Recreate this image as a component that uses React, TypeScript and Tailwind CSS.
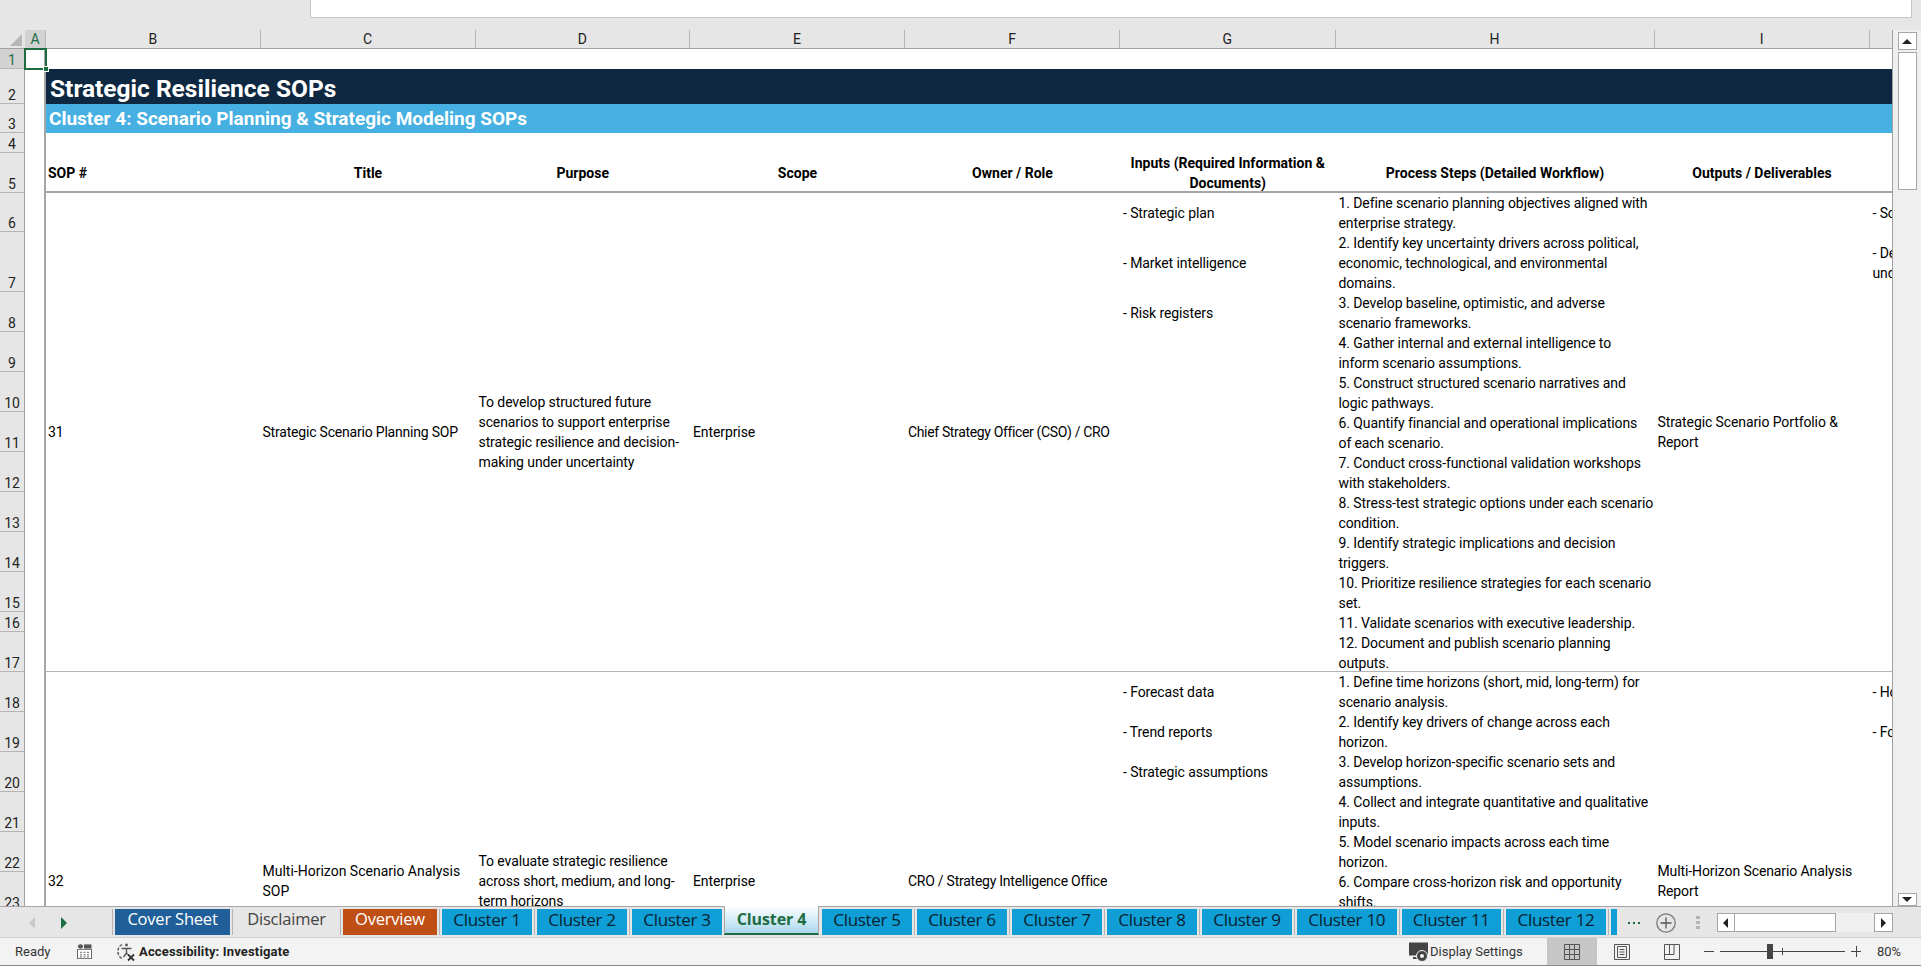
import React from "react";

const FONT = "font-['Roboto','Liberation_Sans',sans-serif]";
const TAB = "font-['Open_Sans','Noto_Sans',sans-serif] text-[16.5px] pb-[5px]";
const CTAB = "font-['Open_Sans','Noto_Sans',sans-serif] text-[17px] pb-[5px]";
const COLS = "grid grid-cols-[214.5px_215px_214.5px_215px_215px_215.5px_319px_215px_80px]";

const colLabels: [string, string][] = [
  ["A", "w-[21px]"],
  ["B", "w-[214.5px]"],
  ["C", "w-[215px]"],
  ["D", "w-[214.5px]"],
  ["E", "w-[215px]"],
  ["F", "w-[215px]"],
  ["G", "w-[215.5px]"],
  ["H", "w-[319px]"],
  ["I", "w-[215px]"],
];

const rowHeights: [number, string][] = [
  [1, "h-[20px]"], [2, "h-[35px]"], [3, "h-[29px]"], [4, "h-[20px]"], [5, "h-[40px]"],
  [6, "h-[39px]"], [7, "h-[60px]"], [8, "h-[40px]"], [9, "h-[40px]"], [10, "h-[40px]"],
  [11, "h-[40px]"], [12, "h-[40px]"], [13, "h-[40px]"], [14, "h-[40px]"], [15, "h-[40px]"],
  [16, "h-[20px]"], [17, "h-[40px]"], [18, "h-[40px]"], [19, "h-[40px]"], [20, "h-[40px]"],
  [21, "h-[40px]"], [22, "h-[40px]"], [23, "h-[40px]"],
];

const steps1 = [
  "1. Define scenario planning objectives aligned with", "enterprise strategy.",
  "2. Identify key uncertainty drivers across political,", "economic, technological, and environmental", "domains.",
  "3. Develop baseline, optimistic, and adverse", "scenario frameworks.",
  "4. Gather internal and external intelligence to", "inform scenario assumptions.",
  "5. Construct structured scenario narratives and", "logic pathways.",
  "6. Quantify financial and operational implications", "of each scenario.",
  "7. Conduct cross-functional validation workshops", "with stakeholders.",
  "8. Stress-test strategic options under each scenario", "condition.",
  "9. Identify strategic implications and decision", "triggers.",
  "10. Prioritize resilience strategies for each scenario", "set.",
  "11. Validate scenarios with executive leadership.",
  "12. Document and publish scenario planning", "outputs.",
];
const steps2 = [
  "1. Define time horizons (short, mid, long-term) for", "scenario analysis.",
  "2. Identify key drivers of change across each", "horizon.",
  "3. Develop horizon-specific scenario sets and", "assumptions.",
  "4. Collect and integrate quantitative and qualitative", "inputs.",
  "5. Model scenario impacts across each time", "horizon.",
  "6. Compare cross-horizon risk and opportunity", "shifts.",
];

function Lines({ lines }: { lines: string[] }) {
  return (
    <>
      {lines.map((l, i) => (
        <div key={i} className="h-[20px] leading-[20px] whitespace-nowrap">{l}</div>
      ))}
    </>
  );
}

const tabs: [string, string][] = [
  ["Cover Sheet", "w-[115px] bg-[#215f9a] text-white"],
  ["Disclaimer", "w-[103px] text-[#444]"],
  ["Overview", "w-[94px] bg-[#c04f15] text-white"],
];
const clusterTabs: [string, string][] = [
  ["Cluster 1", "w-[90px]"], ["Cluster 2", "w-[90px]"], ["Cluster 3", "w-[90px]"],
];
const clusterTabs2: [string, string][] = [
  ["Cluster 5", "w-[90px]"], ["Cluster 6", "w-[90px]"], ["Cluster 7", "w-[90px]"],
  ["Cluster 8", "w-[90px]"], ["Cluster 9", "w-[90px]"], ["Cluster 10", "w-[99.5px]"],
  ["Cluster 11", "w-[99.5px]"], ["Cluster 12", "w-[100px]"],
];

function TabSep() {
  return <div className="w-[1px] h-[26px] bg-[#b4b4b4] mx-[2px] shrink-0" />;
}

function ClusterTab({ label, w }: { label: string; w: string }) {
  return (
    <div className={`${w} ${CTAB} h-[26px] bg-[#0f9ed5] text-[#0a2230] flex items-center justify-center shrink-0 whitespace-nowrap tracking-[-0.3px]`}>
      {label}
    </div>
  );
}

export default function App() {
  return (
    <div className={`${FONT} w-[1921px] h-[966px] overflow-hidden flex flex-col bg-[#e6e6e6] text-[14px] tracking-[-0.1px] text-black`}>
      {/* formula strip */}
      <div className="h-[30px] shrink-0 pl-[310px] pr-[9px]">
        <div className="h-[18px] bg-white border-l border-r border-b border-[#c6c6c6]" />
      </div>

      {/* main */}
      <div className="flex h-[876px] shrink-0">
        <div className="w-[1893px] shrink-0 overflow-hidden border-r border-[#a0a0a0] flex flex-col">
          {/* column header */}
          <div className="flex h-[19px] shrink-0 border-b border-[#a0a0a0] bg-[#e6e6e6] text-[#222] leading-[18px]">
            <div className="w-[25px] shrink-0 flex items-end justify-end pr-[3px] pb-[2px]">
              <div className="w-0 h-0 border-l-[12px] border-l-transparent border-b-[12px] border-b-[#b7b7b7]" />
            </div>
            {colLabels.map(([l, w]) => (
              <div
                key={l}
                className={`${w} shrink-0 text-center border-r border-[#b4b4b4] ${l === "A" ? "bg-[#d2d2d2] text-[#1e6c41]" : ""}`}
              >
                {l}
              </div>
            ))}
          </div>

          <div className="flex flex-1 min-h-0">
            {/* row header */}
            <div className="w-[25px] shrink-0 bg-[#e6e6e6] border-r border-[#a0a0a0] text-[#222]">
              {rowHeights.map(([n, h]) => (
                <div
                  key={n}
                  className={`${h} box-border border-b border-[#b4b4b4] flex items-end justify-center leading-[15px] ${n === 1 ? "bg-[#d2d2d2] text-[#1e6c41]" : ""}`}
                >
                  {n}
                </div>
              ))}
            </div>

            {/* col A + sheet */}
            <div className="relative z-10 w-[21px] shrink-0 bg-white border-r-2 border-[#a6a6a6]">
              <div className="absolute left-[-1px] top-[-1px] w-[23px] h-[22px] border-2 border-[#1e6c41]">
                <div className="absolute right-[-4px] bottom-[-4px] w-[6px] h-[6px] bg-[#1e6c41] border border-white" />
              </div>
            </div>
            <div className="flex-1 min-w-0 bg-white overflow-hidden">
              <div className="h-[20px]" />
              <div className="h-[35px] bg-[#0e2841] text-white font-bold text-[24.5px] tracking-normal leading-[31px] pt-[4px] pl-[4px] whitespace-nowrap">
                Strategic Resilience SOPs
              </div>
              <div className="h-[29px] bg-[#45b0e1] text-white font-bold text-[19px] tracking-normal leading-[29px] pl-[3px] whitespace-nowrap">
                Cluster 4: Scenario Planning &amp; Strategic Modeling SOPs
              </div>
              <div className="h-[20px]" />
              {/* header row */}
              <div className={`${COLS} h-[40px] border-b-2 border-[#a6a6a6] font-bold text-[14px] tracking-normal leading-[20px]`}>
                <div className="pl-[2px] self-center">SOP #</div>
                <div className="text-center self-center">Title</div>
                <div className="text-center self-center">Purpose</div>
                <div className="text-center self-center">Scope</div>
                <div className="text-center self-center">Owner / Role</div>
                <div className="text-center self-center whitespace-nowrap">
                  Inputs (Required Information &amp;
                  <br />
                  Documents)
                </div>
                <div className="text-center self-center">Process Steps (Detailed Workflow)</div>
                <div className="text-center self-center">Outputs / Deliverables</div>
                <div />
              </div>

              {/* SOP 31 */}
              <div className={`${COLS} h-[479px] border-b border-[#b4b4b4]`}>
                <div className="pl-[2px] pb-[2px] self-center">31</div>
                <div className="pl-[2px] pb-[2px] self-center whitespace-nowrap tracking-[-0.2px]">Strategic Scenario Planning SOP</div>
                <div className="pl-[3px] pb-[2px] self-center">
                  <Lines lines={["To develop structured future", "scenarios to support enterprise", "strategic resilience and decision-", "making under uncertainty"]} />
                </div>
                <div className="pl-[3px] pb-[2px] self-center">Enterprise</div>
                <div className="pl-[3px] pb-[2px] self-center whitespace-nowrap tracking-[-0.35px]">Chief Strategy Officer (CSO) / CRO</div>
                <div className="pl-[3px] grid grid-rows-[40px_60px_40px] content-start items-center whitespace-nowrap">
                  <div>- Strategic plan</div>
                  <div>- Market intelligence</div>
                  <div>- Risk registers</div>
                </div>
                <div className="pl-[3px]"><Lines lines={steps1} /></div>
                <div className="pl-[3px] pb-[2px] self-center"><Lines lines={["Strategic Scenario Portfolio &", "Report"]} /></div>
                <div className="pl-[3px] grid grid-rows-[40px_60px] content-start items-center overflow-hidden">
                  <div className="whitespace-nowrap">- Scenario portfolio</div>
                  <div className="leading-[20px] whitespace-nowrap">- Decision guidance<br />under uncertainty</div>
                </div>
              </div>

              {/* SOP 32 */}
              <div className={`${COLS} h-[418px]`}>
                <div className="pl-[2px] self-center">32</div>
                <div className="pl-[2px] self-center tracking-normal"><Lines lines={["Multi-Horizon Scenario Analysis", "SOP"]} /></div>
                <div className="pl-[3px] self-center">
                  <Lines lines={["To evaluate strategic resilience", "across short, medium, and long-", "term horizons"]} />
                </div>
                <div className="pl-[3px] self-center">Enterprise</div>
                <div className="pl-[3px] self-center whitespace-nowrap tracking-[-0.25px]">CRO / Strategy Intelligence Office</div>
                <div className="pl-[3px] grid grid-rows-[40px_40px_40px] content-start items-center whitespace-nowrap">
                  <div>- Forecast data</div>
                  <div>- Trend reports</div>
                  <div>- Strategic assumptions</div>
                </div>
                <div className="pl-[3px]"><Lines lines={steps2} /></div>
                <div className="pl-[3px] self-center"><Lines lines={["Multi-Horizon Scenario Analysis", "Report"]} /></div>
                <div className="pl-[3px] grid grid-rows-[40px_40px] content-start items-center overflow-hidden">
                  <div className="whitespace-nowrap">- Horizon matrix</div>
                  <div className="whitespace-nowrap">- Forecast report</div>
                </div>
              </div>
            </div>
          </div>
        </div>

        {/* vertical scrollbar */}
        <div className="flex-1 min-w-0 flex flex-col items-center pt-[2px] bg-[#efefef]">
          <div className="w-[19px] h-[18px] bg-white border border-[#a6a6a6] flex items-center justify-center">
            <div className="w-0 h-0 border-l-[5px] border-r-[5px] border-b-[5px] border-l-transparent border-r-transparent border-b-[#222]" />
          </div>
          <div className="w-[19px] h-[138px] mt-[2px] bg-white border border-[#a6a6a6]" />
          <div className="flex-1" />
          <div className="w-[19px] h-[13px] bg-white border border-[#a6a6a6] flex items-center justify-center">
            <div className="w-0 h-0 border-l-[5px] border-r-[5px] border-t-[5px] border-l-transparent border-r-transparent border-t-[#222]" />
          </div>
        </div>
      </div>

      {/* tabs */}
      <div className="h-[32px] shrink-0 flex border-t border-[#a6a6a6] border-b border-b-[#cfcfcf] bg-[#e6e6e6] pt-[2px]">
        <div className="w-[112px] shrink-0 flex items-start pt-[8px] pl-[29px] gap-[24px]">
          <svg width="7" height="12" viewBox="0 0 7 12"><path d="M6 0L0 6l6 6z" fill="#c9c9c9" /></svg>
          <svg width="7" height="12" viewBox="0 0 7 12"><path d="M1 0l6 6-6 6z" fill="#1e6c41" /></svg>
        </div>
        <div className="flex items-start">
          <div className="w-[1px] h-[26px] bg-[#b4b4b4] mr-[2px]" />
          {tabs.map(([l, c]) => (
            <React.Fragment key={l}>
              <div className={`${c} ${TAB} h-[26px] flex items-center justify-center shrink-0 whitespace-nowrap tracking-[-0.2px]`}>{l}</div>
              <TabSep />
            </React.Fragment>
          ))}
          {clusterTabs.map(([l, w]) => (
            <React.Fragment key={l}>
              <ClusterTab label={l} w={w} />
              <TabSep />
            </React.Fragment>
          ))}
          <div className="font-['Open_Sans','Noto_Sans',sans-serif] text-[16px] w-[95px] h-[29px] -mt-[3px] ml-[-3px] mr-[-2px] pb-[1px] shrink-0 flex items-center justify-center font-bold text-[#1e6c41] bg-gradient-to-b from-white to-[#a9d8ee] border-l border-r border-[#a6a6a6] border-b-2 border-b-[#1e6c41]">
            Cluster 4
          </div>
          <div className="w-[1px] h-[26px] mx-[2px] shrink-0" />
          {clusterTabs2.map(([l, w]) => (
            <React.Fragment key={l}>
              <ClusterTab label={l} w={w} />
              <TabSep />
            </React.Fragment>
          ))}
          <div className="w-[6px] h-[26px] bg-[#0f9ed5] shrink-0" />
        </div>
        <div className="flex-1 flex items-start">
          <div className="ml-[11px] mt-[13px] flex gap-[3px] shrink-0">
            <div className="w-[2px] h-[2px] bg-[#1e6c41]" />
            <div className="w-[2px] h-[2px] bg-[#1e6c41]" />
            <div className="w-[2px] h-[2px] bg-[#1e6c41]" />
          </div>
          <svg className="ml-[16px] mt-[4px] shrink-0" width="20" height="20" viewBox="0 0 20 20" fill="none" stroke="#7a7a7a" strokeWidth="1.3">
            <circle cx="10" cy="10" r="9.2" />
            <path d="M10 4.5v11M4.5 10h11" stroke="#555" />
          </svg>
          <div className="ml-[20px] mt-[7px] flex flex-col gap-[2px] shrink-0">
            <div className="w-[3.5px] h-[3px] bg-[#b5b5b5]" />
            <div className="w-[3.5px] h-[3px] bg-[#b5b5b5]" />
            <div className="w-[3.5px] h-[3px] bg-[#b5b5b5]" />
          </div>
          <div className="ml-[17px] mt-[4px] w-[176.5px] h-[19px] flex shrink-0 bg-[#f0f0f0]">
            <div className="w-[18.5px] h-full bg-white border border-[#a6a6a6] flex items-center justify-center">
              <div className="w-0 h-0 border-t-[5px] border-b-[5px] border-r-[5px] border-t-transparent border-b-transparent border-r-[#222]" />
            </div>
            <div className="w-[101px] h-full bg-white border-y border-r border-[#a6a6a6]" />
            <div className="flex-1" />
            <div className="w-[19px] h-full bg-white border border-[#a6a6a6] flex items-center justify-center">
              <div className="w-0 h-0 border-t-[5px] border-b-[5px] border-l-[5px] border-t-transparent border-b-transparent border-l-[#222]" />
            </div>
          </div>
        </div>
      </div>

      {/* status bar */}
      <div className="h-[28px] shrink-0 bg-[#f3f3f3] flex items-center text-[13px] tracking-normal text-[#333] border-b border-[#8a8a8a] pr-[20px]">
        <div className="ml-[15px] w-[62px] shrink-0">Ready</div>
        <svg className="shrink-0" width="15" height="15" viewBox="0 0 15 18" fill="none" preserveAspectRatio="none">
          <circle cx="3.5" cy="3" r="2.6" fill="#555" />
          <rect x="7" y="0.5" width="7.5" height="5" fill="#555" />
          <rect x="0.5" y="6.5" width="14" height="11" fill="#fff" stroke="#666" />
          <path d="M3 10h2M6.5 10h2M10 10h2M3 13h2M6.5 13h2M10 13h2M3 15.5h2M6.5 15.5h2M10 15.5h2" stroke="#555" />
        </svg>
        <svg className="ml-[24px] shrink-0" width="20" height="20" viewBox="0 0 20 20" fill="none" stroke="#555" strokeWidth="1.4">
          <path d="M6 2.5A8 8 0 0 0 6 16.5" strokeDasharray="3 1.5" />
          <circle cx="10.5" cy="3" r="1.4" fill="#555" stroke="none" />
          <path d="M5.5 6.5h10M10.5 6v5l-3 4M10.5 11l1 1.5" />
          <path d="M12 12.5l6 6M18 12.5l-6 6" stroke="#333" strokeWidth="1.8" />
        </svg>
        <div className="ml-[3px] font-bold whitespace-nowrap text-[#222] tracking-[0.15px]">Accessibility: Investigate</div>
        <div className="flex-1" />
        <svg className="shrink-0" width="20" height="20" viewBox="0 0 20 20" fill="none">
          <path d="M0 0.5h19v13H0z" fill="#444" />
          <path d="M4 15h4v2H4z" fill="#444" />
          <circle cx="13" cy="14" r="5.5" fill="#444" stroke="#f3f3f3" strokeWidth="1" />
          <circle cx="13" cy="14" r="2" fill="#f3f3f3" />
        </svg>
        <div className="ml-[1px] w-[117px] whitespace-nowrap shrink-0">Display Settings</div>
        <div className="w-[50px] h-full bg-[#c6c6c6] flex items-center justify-center shrink-0">
          <svg width="16" height="16" viewBox="0 0 16 16" fill="none" stroke="#555">
            <path d="M.5.5h15v15H.5zM5.5.5v15M10.5.5v15M.5 5.5h15M.5 10.5h15" />
          </svg>
        </div>
        <div className="w-[50px] flex items-center justify-center shrink-0">
          <svg width="16" height="16" viewBox="0 0 16 16" fill="none" stroke="#555">
            <path d="M.5.5h15v15H.5z" />
            <path d="M3.5 2.5h9v11h-9zM5.5 5.5h5M5.5 8h5M5.5 10.5h5" />
          </svg>
        </div>
        <div className="w-[50px] flex items-center justify-center shrink-0">
          <svg width="16" height="16" viewBox="0 0 16 16" fill="none" stroke="#555">
            <path d="M.5.5h15v15H.5zM.5 10.5h9.5V.5M5.5.5v10" />
          </svg>
        </div>
        <div className="w-[10px] h-[1px] ml-[7px] bg-[#444] shrink-0" />
        <div className="relative ml-[6px] w-[125px] h-[1px] bg-[#444] shrink-0">
          <div className="absolute left-[47px] top-[-7px] w-[6px] h-[15px] bg-[#444]" />
          <div className="absolute left-[62px] top-[-3px] w-[1px] h-[7px] bg-[#444]" />
        </div>
        <div className="relative ml-[6px] w-[10px] h-[11px] shrink-0">
          <div className="absolute left-0 top-[5px] w-[10px] h-[1px] bg-[#444]" />
          <div className="absolute left-[5px] top-0 w-[1px] h-[11px] bg-[#444]" />
        </div>
        <div className="ml-[16px] w-[24px] whitespace-nowrap shrink-0">80%</div>
      </div>
    </div>
  );
}
